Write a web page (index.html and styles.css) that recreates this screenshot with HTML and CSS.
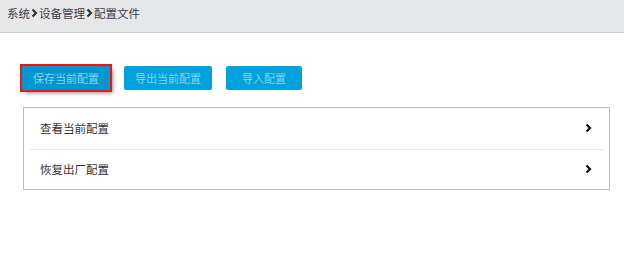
FILE: index.html
```html
<!DOCTYPE html>
<html lang="zh-CN">
<head>
<meta charset="utf-8">
<title>配置文件</title>
<link rel="stylesheet" href="styles.css">
</head>
<body>
<header class="crumbs">
  <span>系统</span>
  <svg class="sep" width="7" height="10" viewBox="0 0 7 10"><path d="M1.5 1.5 L5 5 L1.5 8.5" fill="none" stroke="#333" stroke-width="2.2"/></svg>
  <span>设备管理</span>
  <svg class="sep" width="7" height="10" viewBox="0 0 7 10"><path d="M1.5 1.5 L5 5 L1.5 8.5" fill="none" stroke="#333" stroke-width="2.2"/></svg>
  <span>配置文件</span>
</header>
<main class="content">
  <div class="actions">
    <button class="btn btn-active">保存当前配置</button>
    <button class="btn">导出当前配置</button>
    <button class="btn">导入配置</button>
  </div>
  <div class="card">
    <div class="row">
      <span>查看当前配置</span>
      <svg class="chev" width="7" height="10" viewBox="0 0 7 10"><path d="M1.5 1.5 L5 5 L1.5 8.5" fill="none" stroke="#111" stroke-width="2.2"/></svg>
    </div>
    <div class="row">
      <span>恢复出厂配置</span>
      <svg class="chev" width="7" height="10" viewBox="0 0 7 10"><path d="M1.5 1.5 L5 5 L1.5 8.5" fill="none" stroke="#111" stroke-width="2.2"/></svg>
    </div>
  </div>
</main>
</body>
</html>
```
FILE: styles.css
```css
* { box-sizing: border-box; }
html, body { margin: 0; padding: 0; background: #fff; }
body {
  font-family: "Noto Sans CJK SC", "Noto Sans", sans-serif;
  font-size: 11.5px;
  color: #333;
}
.crumbs {
  height: 33px;
  background: #e6e7e9;
  border-bottom: 1px solid #d2d2d2;
  display: flex;
  align-items: center;
  padding: 0 0 7px 7px;
  color: #40404c;
  font-size: 11.5px;
}
.crumbs .sep { margin: 0 1px 0 1px; }
.content {
  padding: 33px 14px 0 23px;
}
.actions {
  display: flex;
  gap: 14px;
  margin-left: -1px;
}
.btn {
  height: 24px;
  min-width: 76px;
  padding: 0 11px;
  border: 0;
  border-radius: 2px;
  background: #00a2dc;
  color: #80d4f2;
  font-family: inherit;
  font-size: 11px;
  line-height: 24px;
}
.btn-active {
  background: #0496cf;
  outline: 2px solid #f01414;
  box-shadow: 3px 3px 4px rgba(0, 0, 0, 0.45);
  border-radius: 0;
}
.card {
  margin-top: 17px;
  border: 1px solid #bdbdbd;
  padding: 0 5px 0 6px;
}
.row {
  height: 41px;
  display: flex;
  align-items: center;
  justify-content: space-between;
  padding: 0 12px 1px 10px;
  color: #333;
}
.row + .row { border-top: 1px solid #e6e6e6; height: 40px; }
```
